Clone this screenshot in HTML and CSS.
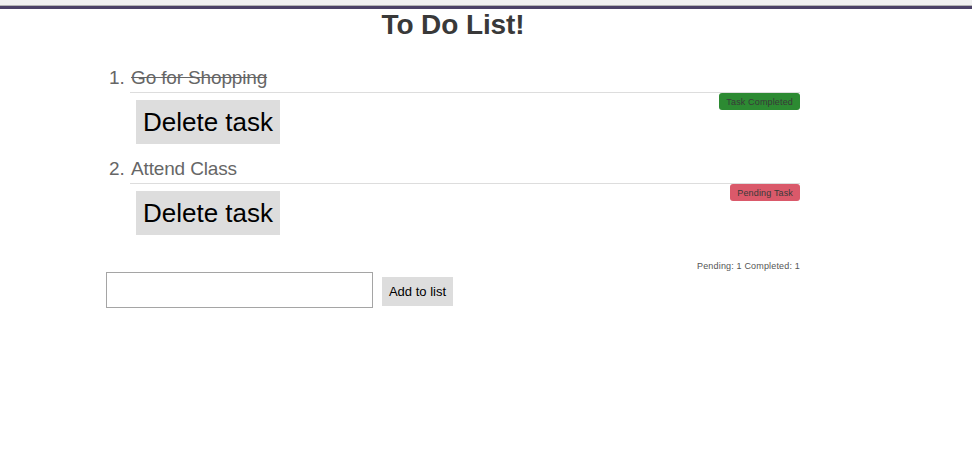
FILE: index.html
```html
<!DOCTYPE html>
<html lang="en">
<head>
<meta charset="utf-8">
<title>To Do List</title>
<link rel="stylesheet" href="styles.css">
</head>
<body>
<div class="topbar"></div>
<main class="todo">
<h1>To Do List!</h1>
<ol class="tasks">
<li class="task"><div class="name done">Go for Shopping</div><div class="row"><button class="delete">Delete task</button><span class="badge completed">Task Completed</span></div></li>
<li class="task"><div class="name">Attend Class</div><div class="row"><button class="delete">Delete task</button><span class="badge pending">Pending Task</span></div></li>
</ol>
<p class="summary">Pending: 1 Completed: 1</p>
<form class="add"><input type="text" aria-label="New task"><button type="button">Add to list</button></form>
</main>
</body>
</html>
```
FILE: styles.css
```css
* { box-sizing: border-box; }
body { margin: 0; background: #fff; color: #393939; font-family: "Liberation Sans", Arial, sans-serif; }
.topbar { height: 9px; background: #f1f1f1; border-bottom: 3px solid #4c4267; box-shadow: inset 0 -1px #b5b5b5; }
.todo { width: 694px; margin-left: 106px; }
h1 { margin: 0; font-size: 28px; line-height: 31px; letter-spacing: -0.1px; text-align: center; }
.tasks { margin: 22px 0 0; padding: 0 0 0 24px; color: #666; font-size: 19px; }
.task { height: 91px; }
.name { height: 31px; padding: 4px 0 0 1px; line-height: 24px; letter-spacing: -0.15px; border-bottom: 1px solid #ddd; }
.done { text-decoration: line-through; }
.row { display: flex; justify-content: space-between; align-items: flex-start; }
button { border: 0; padding: 0; background: #ddd; color: #000; font-family: inherit; }
.delete { width: 144px; height: 44px; margin: 7px 0 0 6px; font-size: 26px; }
.badge { height: 17px; padding: 0 7px; border-radius: 3px; color: #393939; font-size: 9px; line-height: 18px; letter-spacing: 0.15px; }
.completed { background: #2c8a32; }
.pending { background: #da596a; }
.summary { margin: 16px 0 0; height: 12px; color: #555; font-size: 9px; line-height: 12px; letter-spacing: 0.17px; text-align: right; }
.add { display: flex; align-items: flex-end; gap: 9px; height: 36px; }
.add input { width: 267px; height: 36px; border: 1px solid #a5a5a5; padding: 4px; }
.add button { width: 71px; height: 29px; margin-bottom: 2px; font-size: 13px; }
```
